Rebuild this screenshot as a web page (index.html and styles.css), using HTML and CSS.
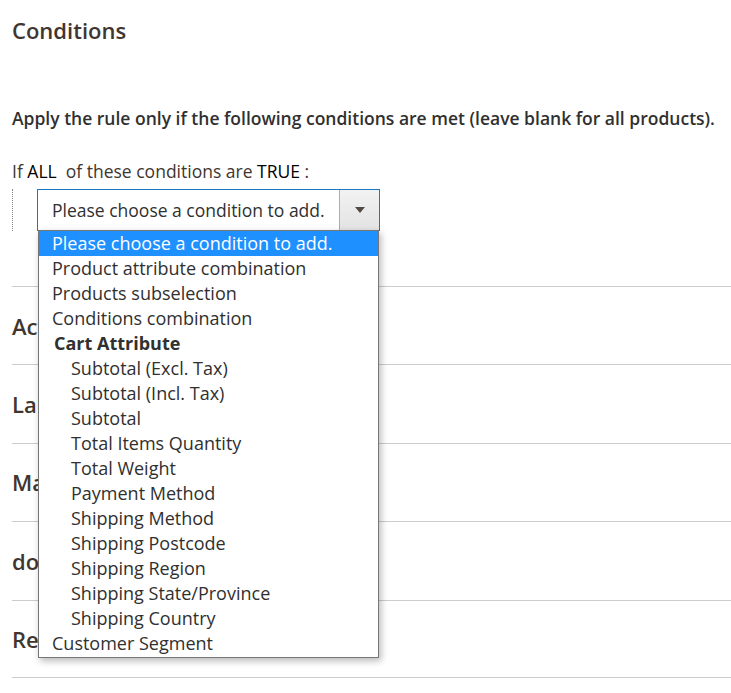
FILE: index.html
```html
<!DOCTYPE html>
<html lang="en">
<head>
<meta charset="utf-8">
<title>Conditions</title>
<link rel="stylesheet" href="styles.css">
</head>
<body>
<div class="page">
  <section class="conditions">
    <h2 class="section-title">Conditions</h2>
    <p class="intro">Apply the rule only if the following conditions are met (leave blank for all products).</p>
    <div class="rule-tree">
      <p class="rule-line">If <span class="param">ALL</span>&nbsp; of these conditions are <span class="param">TRUE</span> :</p>
      <div class="children">
        <div class="select-wrap">
          <div class="select">
            <span class="select-text">Please choose a condition to add.</span>
            <span class="select-btn"><span class="arrow"></span></span>
          </div>
          <ul class="dropdown">
            <li class="opt selected">Please choose a condition to add.</li>
            <li class="opt">Product attribute combination</li>
            <li class="opt">Products subselection</li>
            <li class="opt">Conditions combination</li>
            <li class="group">Cart Attribute</li>
            <li class="opt sub">Subtotal (Excl. Tax)</li>
            <li class="opt sub">Subtotal (Incl. Tax)</li>
            <li class="opt sub">Subtotal</li>
            <li class="opt sub">Total Items Quantity</li>
            <li class="opt sub">Total Weight</li>
            <li class="opt sub">Payment Method</li>
            <li class="opt sub">Shipping Method</li>
            <li class="opt sub">Shipping Postcode</li>
            <li class="opt sub">Shipping Region</li>
            <li class="opt sub">Shipping State/Province</li>
            <li class="opt sub">Shipping Country</li>
            <li class="opt">Customer Segment</li>
          </ul>
        </div>
      </div>
    </div>
  </section>
  <section class="fold"><h3 class="fold-title">Actions</h3></section>
  <section class="fold"><h3 class="fold-title">Labels</h3></section>
  <section class="fold"><h3 class="fold-title">Manage Coupon Codes</h3></section>
  <section class="fold"><h3 class="fold-title">dotdigital</h3></section>
  <section class="fold last"><h3 class="fold-title">Related Dynamic Blocks</h3></section>
</div>
</body>
</html>
```

FILE: styles.css
```css
* { box-sizing: border-box; }
html, body { margin: 0; padding: 0; background: #fff; }
body {
  font-family: "Open Sans", "Noto Sans", Arial, sans-serif;
  color: #303030;
  overflow: hidden;
}
.page { padding-left: 12px; }

.conditions { padding-top: 16px; height: 286px; }
.section-title {
  margin: 0;
  font-size: 22px;
  font-weight: 600;
  line-height: 28px;
  color: #41362f;
}
.intro {
  margin: 62px 0 0;
  font-size: 17.5px;
  font-weight: 600;
  line-height: 24px;
  color: #303030;
}
.rule-tree { margin-top: 29px; }
.rule-line {
  margin: 0;
  font-size: 17.5px;
  line-height: 24px;
  color: #41362f;
}
.param { color: #000; }
.children {
  margin-top: 6px;
  border-left: 1px dotted #8a8a8a;
  padding-left: 24px;
  height: 42px;
}
.select-wrap { position: relative; width: 343px; }
.select {
  display: flex;
  height: 42px;
  border: 1px solid #1979c3;
  background: #fff;
}
.select-text {
  flex: 1;
  padding-left: 14px;
  font-size: 17.5px;
  line-height: 40px;
  color: #303030;
  white-space: nowrap;
}
.select-btn {
  width: 40px;
  border-left: 1px solid #adadad;
  background: linear-gradient(#f2f2f2, #e3e3e3);
  display: flex;
  align-items: center;
  justify-content: center;
}
.arrow {
  width: 0; height: 0;
  border-left: 5px solid transparent;
  border-right: 5px solid transparent;
  border-top: 6px solid #514943;
}

.dropdown {
  position: absolute;
  left: 1px;
  top: 41px;
  width: 341px;
  margin: 0;
  padding: 0 0 1px;
  list-style: none;
  background: #fff;
  border: 1px solid #767676;
  box-shadow: 2px 3px 7px rgba(0,0,0,0.28);
  z-index: 5;
}
.dropdown li {
  height: 25px;
  line-height: 25px;
  font-size: 18px;
  color: #303030;
  white-space: nowrap;
  padding-left: 13px;
}
.dropdown .selected { background: #1e90ff; color: #fff; }
.dropdown .group { font-weight: 700; padding-left: 15px; color: #303030; }
.dropdown .sub { padding-left: 32px; }

.fold {
  border-top: 1px solid #cccccc;
  height: 78.4px;
  display: flex;
  align-items: center;
}
.fold.last { border-bottom: 1px solid #cccccc; }
.fold-title {
  margin: 0;
  font-size: 22px;
  font-weight: 600;
  color: #41362f;
  white-space: nowrap;
}
```
